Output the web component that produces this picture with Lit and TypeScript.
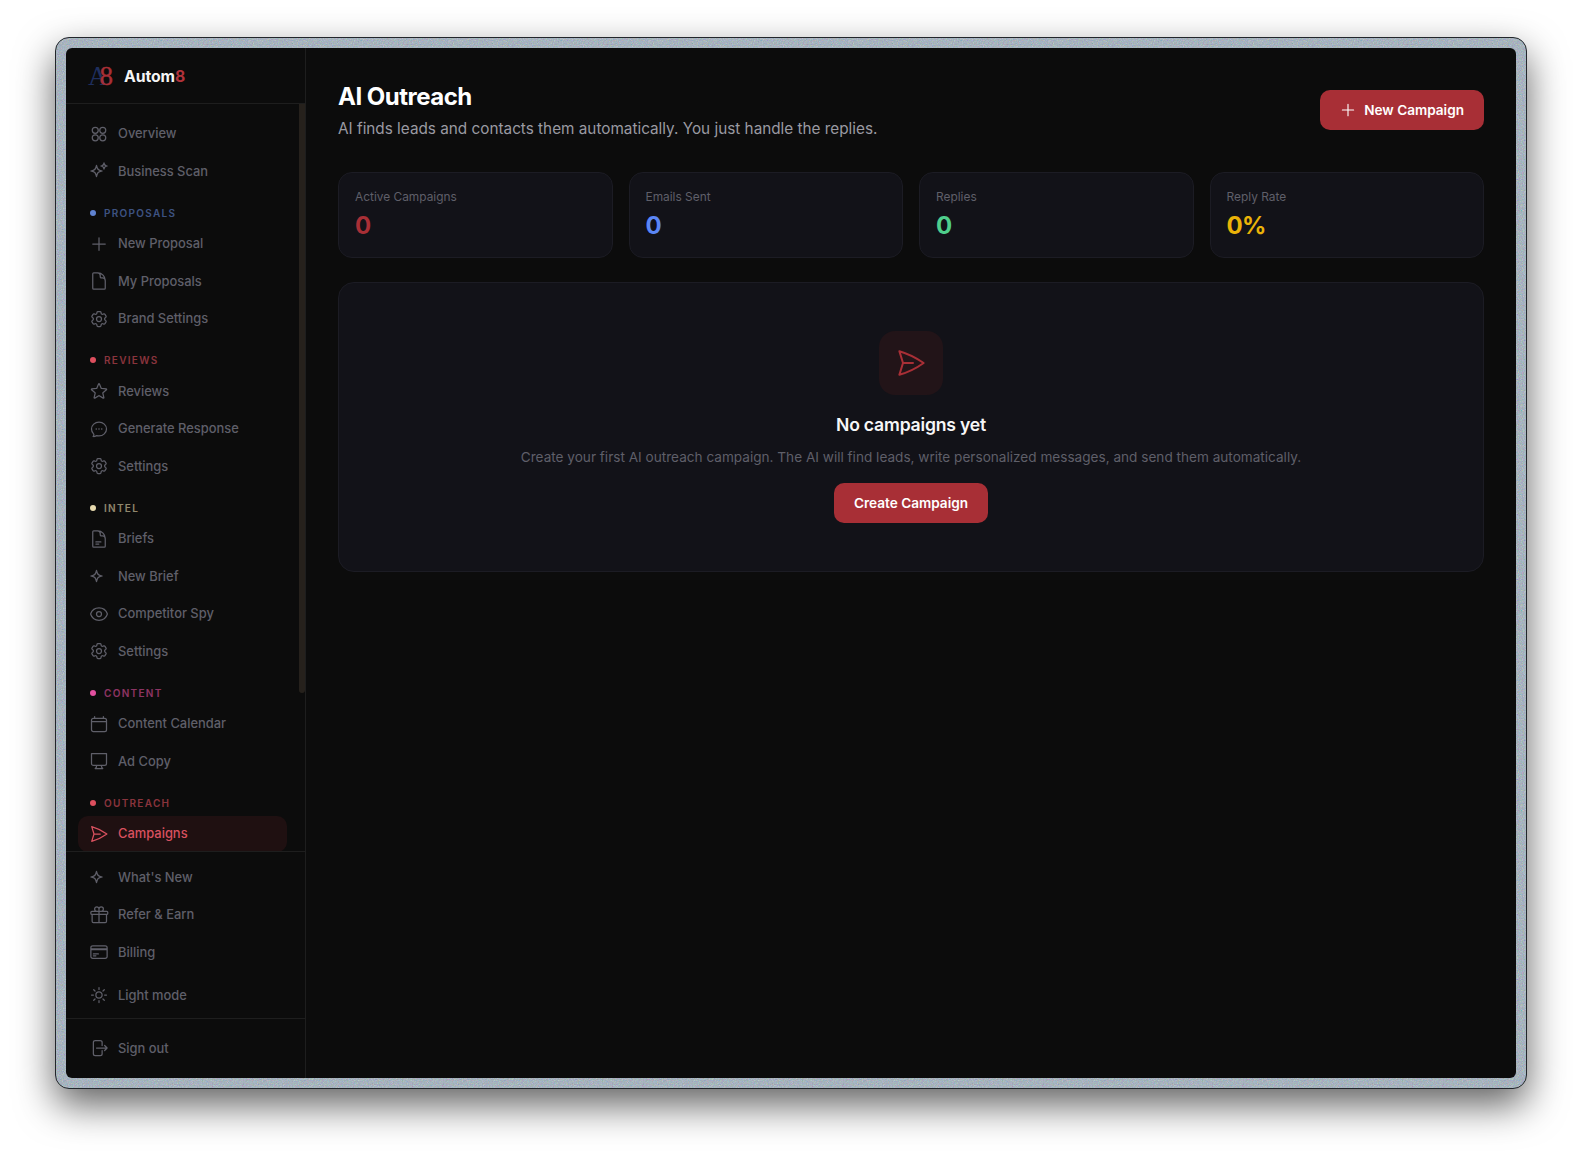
import { LitElement, html, css, svg } from "lit";
import { customElement } from "lit/decorators.js";

const doc = "M19.5 14.25v-2.625a3.375 3.375 0 0 0-3.375-3.375h-1.5A1.125 1.125 0 0 1 13.5 7.125v-1.5a3.375 3.375 0 0 0-3.375-3.375H8.25m2.25 0H5.625c-.621 0-1.125.504-1.125 1.125v17.25c0 .621.504 1.125 1.125 1.125h12.75c.621 0 1.125-.504 1.125-1.125V11.25a9 9 0 0 0-9-9Z";
const gear = "M9.594 3.94c.09-.542.56-.94 1.11-.94h2.593c.55 0 1.02.398 1.11.94l.213 1.281c.063.374.313.686.645.87.074.04.147.083.22.127.325.196.72.257 1.075.124l1.217-.456a1.125 1.125 0 0 1 1.37.49l1.296 2.247a1.125 1.125 0 0 1-.26 1.431l-1.003.827c-.293.241-.438.613-.43.992a7.723 7.723 0 0 1 0 .255c-.008.378.137.75.43.991l1.004.827c.424.35.534.955.26 1.43l-1.298 2.247a1.125 1.125 0 0 1-1.369.491l-1.217-.456c-.355-.133-.75-.072-1.076.124a6.47 6.47 0 0 1-.22.128c-.331.183-.581.495-.644.869l-.213 1.281c-.09.543-.56.94-1.11.94h-2.594c-.55 0-1.019-.398-1.11-.94l-.213-1.281c-.062-.374-.312-.686-.644-.87a6.52 6.52 0 0 1-.22-.127c-.325-.196-.72-.257-1.076-.124l-1.217.456a1.125 1.125 0 0 1-1.369-.49l-1.297-2.247a1.125 1.125 0 0 1 .26-1.431l1.004-.827c.292-.24.437-.613.43-.991a6.932 6.932 0 0 1 0-.255c.007-.38-.138-.751-.43-.992l-1.004-.827a1.125 1.125 0 0 1-.26-1.43l1.297-2.247a1.125 1.125 0 0 1 1.37-.491l1.216.456c.356.133.751.072 1.076-.124.072-.044.146-.086.22-.128.332-.183.582-.495.644-.869l.214-1.28Z M15 12a3 3 0 1 1-6 0 3 3 0 0 1 6 0Z";
const spark = "M9.813 15.904 9 18.75l-.813-2.846a4.5 4.5 0 0 0-3.09-3.09L2.25 12l2.846-.813a4.5 4.5 0 0 0 3.09-3.09L9 5.25l.813 2.846a4.5 4.5 0 0 0 3.09 3.09L15.75 12l-2.846.813a4.5 4.5 0 0 0-3.09 3.09Z";
const plane = "M6 12 3.269 3.125A59.769 59.769 0 0 1 21.485 12 59.768 59.768 0 0 1 3.27 20.875L5.999 12Zm0 0h7.5";
const plus = "M12 4.5v15m7.5-7.5h-15";

const icons: Record<string, any> = {
  grid: svg`<circle cx="7.5" cy="7.5" r="3.6"/><circle cx="16.5" cy="7.5" r="3.6"/><circle cx="7.5" cy="16.5" r="3.6"/><circle cx="16.5" cy="16.5" r="3.6"/>`,
  sparkles: svg`<path d="${spark}"/><path d="M18.259 8.715 18 9.75l-.259-1.035a3.375 3.375 0 0 0-2.455-2.456L14.25 6l1.036-.259a3.375 3.375 0 0 0 2.455-2.456L18 2.25l.259 1.035a3.375 3.375 0 0 0 2.456 2.456L21.75 6l-1.035.259a3.375 3.375 0 0 0-2.456 2.456Z"/>`,
  spark: svg`<path d="${spark}"/>`,
  plus: svg`<path d="${plus}"/>`,
  file: svg`<path d="${doc}"/>`,
  filetext: svg`<path d="${doc}"/><path d="M8.25 15.5h6M8.25 18h3.5"/>`,
  gear: svg`<path d="${gear}"/>`,
  star: svg`<path d="M11.48 3.499a.562.562 0 0 1 1.04 0l2.125 5.111a.563.563 0 0 0 .475.345l5.518.442c.499.04.701.663.321.988l-4.204 3.602a.563.563 0 0 0-.182.557l1.285 5.385a.562.562 0 0 1-.84.61l-4.725-2.885a.562.562 0 0 0-.586 0L6.982 20.54a.562.562 0 0 1-.84-.61l1.285-5.386a.562.562 0 0 0-.182-.557l-4.204-3.602a.562.562 0 0 1 .321-.988l5.518-.442a.563.563 0 0 0 .475-.345L11.48 3.5Z"/>`,
  chat: svg`<path d="M12 20.25c4.97 0 9-3.694 9-8.25s-4.03-8.25-9-8.25S3 7.444 3 12c0 2.104.859 4.023 2.273 5.48.432.447.74 1.04.586 1.641a4.483 4.483 0 0 1-.923 1.785A5.969 5.969 0 0 0 6 21c1.282 0 2.47-.402 3.445-1.087.81.22 1.668.337 2.555.337Z"/><path stroke-width="2" d="M8.7 12h.01M12 12h.01M15.3 12h.01"/>`,
  eye: svg`<path d="M2.036 12.322a1.012 1.012 0 0 1 0-.639C3.423 7.51 7.36 4.5 12 4.5c4.638 0 8.573 3.007 9.963 7.178.07.207.07.431 0 .639C20.577 16.49 16.64 19.5 12 19.5c-4.638 0-8.573-3.007-9.963-7.178Z"/><path d="M15 12a3 3 0 1 1-6 0 3 3 0 0 1 6 0Z"/>`,
  calendar: svg`<path d="M6.75 3v2.25M17.25 3v2.25M3 18.75V7.5a2.25 2.25 0 0 1 2.25-2.25h13.5A2.25 2.25 0 0 1 21 7.5v11.25A2.25 2.25 0 0 1 18.75 21H5.25A2.25 2.25 0 0 1 3 18.75ZM3 9h18"/>`,
  monitor: svg`<path d="M9 17.25v1.007a3 3 0 0 1-.879 2.122L7.5 21h9l-.621-.621A3 3 0 0 1 15 18.257V17.25M3 3h18v12a2.25 2.25 0 0 1-2.25 2.25H5.25A2.25 2.25 0 0 1 3 15V3Z"/>`,
  plane: svg`<path d="${plane}"/>`,
  gift: svg`<path d="M21 11.25v8.25a1.5 1.5 0 0 1-1.5 1.5H5.25a1.5 1.5 0 0 1-1.5-1.5v-8.25M12 4.875A2.625 2.625 0 1 0 9.375 7.5H12m0-2.625V7.5m0-2.625A2.625 2.625 0 1 1 14.625 7.5H12m0 0V21m-8.625-9.75h18c.621 0 1.125-.504 1.125-1.125v-1.5c0-.621-.504-1.125-1.125-1.125h-18c-.621 0-1.125.504-1.125 1.125v1.5c0 .621.504 1.125 1.125 1.125Z"/>`,
  card: svg`<path d="M2.25 8.25h19.5M2.25 9h19.5m-16.5 5.25h6m-6 2.25h3m-3.75 3h15a2.25 2.25 0 0 0 2.25-2.25V6.75A2.25 2.25 0 0 0 19.5 4.5h-15a2.25 2.25 0 0 0-2.25 2.25v10.5A2.25 2.25 0 0 0 4.5 19.5Z"/>`,
  sun: svg`<path d="M12 3v2.25m6.364.386-1.591 1.591M21 12h-2.25m-.386 6.364-1.591-1.591M12 18.75V21m-4.773-4.227-1.591 1.591M5.25 12H3m4.227-4.773L5.636 5.636M15.75 12a3.75 3.75 0 1 1-7.5 0 3.75 3.75 0 0 1 7.5 0Z"/>`,
  logout: svg`<path d="M15.75 9V5.25A2.25 2.25 0 0 0 13.5 3h-6a2.25 2.25 0 0 0-2.25 2.25v13.5A2.25 2.25 0 0 0 7.5 21h6a2.25 2.25 0 0 0 2.25-2.25V15m3 0 3-3m0 0-3-3m3 3H9"/>`,
};

const icon = (name: string, cls = "ico") => html`<svg class=${cls} viewBox="0 0 24 24" fill="none" stroke="currentColor" stroke-width="1.5" stroke-linecap="round" stroke-linejoin="round">${icons[name]}</svg>`;

type Item = [string, string];
const sections: { label?: string; cls?: string; items: Item[] }[] = [
  { items: [["grid", "Overview"], ["sparkles", "Business Scan"]] },
  { label: "Proposals", cls: "blue", items: [["plus", "New Proposal"], ["file", "My Proposals"], ["gear", "Brand Settings"]] },
  { label: "Reviews", cls: "red", items: [["star", "Reviews"], ["chat", "Generate Response"], ["gear", "Settings"]] },
  { label: "Intel", cls: "sand", items: [["filetext", "Briefs"], ["spark", "New Brief"], ["eye", "Competitor Spy"], ["gear", "Settings"]] },
  { label: "Content", cls: "pink", items: [["calendar", "Content Calendar"], ["monitor", "Ad Copy"]] },
  { label: "Outreach", cls: "red", items: [["plane", "Campaigns"]] },
];

const stats = [
  ["Active Campaigns", "0", "v-red"],
  ["Emails Sent", "0", "v-blue"],
  ["Replies", "0", "v-green"],
  ["Reply Rate", "0%", "v-yellow"],
];

@customElement("app-root")
export class AppRoot extends LitElement {
  static styles = css`
    :host {
      display: block;
      height: 1162px;
      background: #fff;
      padding: 37px 55px 0;
      box-sizing: border-box;
      font-family: Inter, "Liberation Sans", sans-serif;
      -webkit-font-smoothing: antialiased;
    }
    .frame {
      width: 1472px;
      height: 1052px;
      box-sizing: border-box;
      padding: 10px;
      border: 1px solid #22262b;
      border-radius: 14px;
      background-color: #9fadb8;
      background-image: url("data:image/svg+xml,%3Csvg xmlns='http://www.w3.org/2000/svg' width='200' height='200'%3E%3Cfilter id='n'%3E%3CfeTurbulence type='fractalNoise' baseFrequency='.8' numOctaves='3' stitchTiles='stitch'/%3E%3CfeColorMatrix values='1.2 0 0 0 -.1 0 1.2 0 0 -.05 0 0 1.3 0 -.03 0 0 0 .7 -.05'/%3E%3C/filter%3E%3Crect width='200' height='200' filter='url(%23n)'/%3E%3C/svg%3E");
      box-shadow: 0 16px 38px rgba(0, 0, 0, 0.62);
    }
    .app {
      display: flex;
      height: 1030px;
      border-radius: 6px;
      overflow: hidden;
      background: #0c0c0c;
    }
    .side {
      width: 240px;
      flex: none;
      box-sizing: border-box;
      border-right: 1px solid #1e1e1e;
      display: flex;
      flex-direction: column;
    }
    .brand {
      height: 56px;
      flex: none;
      box-sizing: border-box;
      border-bottom: 1px solid #1e1e1e;
      display: flex;
      align-items: center;
      padding: 1px 0 0 22px;
      gap: 12px;
    }
    .logo {
      font-family: "Liberation Serif", serif;
      font-size: 27px;
      line-height: 24px;
      width: 24px;
      white-space: nowrap;
      letter-spacing: -8px;
      color: #1f2f5e;
    }
    .logo b { font-weight: 400; color: #a82f36; -webkit-text-stroke: 0.4px #a82f36; }
    .name { font-size: 15.8px; font-weight: 700; color: #f4f4f4; letter-spacing: -0.1px; }
    .name span { color: #b0323a; }
    .nav {
      flex: 1;
      min-height: 0;
      overflow: hidden;
      position: relative;
      padding: 12px 18px 0 12px;
    }
    .thumb {
      position: absolute;
      top: 0;
      right: 0;
      width: 6px;
      height: 589px;
      border-radius: 0 0 3px 3px;
      background: #26211c;
    }
    .group { display: flex; flex-direction: column; gap: 2px; }
    .label {
      display: flex;
      align-items: center;
      gap: 8px;
      height: 14px;
      margin: 16.5px 0 6.5px 12px;
      font-size: 10px;
      font-weight: 600;
      letter-spacing: 1.3px;
      text-transform: uppercase;
    }
    .dot { width: 6px; height: 6px; border-radius: 50%; background: currentColor; flex: none; }
    .label span:last-child { opacity: 0.6; }
    .blue { color: #5f82d0; }
    .red { color: #dd4f5e; }
    .sand { color: #e6d9ae; }
    .pink { color: #e2509f; }
    .item {
      display: flex;
      align-items: center;
      gap: 9px;
      height: 35.5px;
      padding-left: 11px;
      border-radius: 10px;
      font-size: 12.9px;
      font-weight: 500;
      color: #5f5f69;
      white-space: nowrap;
    }
    .item.on { background: #1f1011; color: #d9515f; }
    .ico { width: 20px; height: 20px; flex: none; }
    .foot {
      flex: none;
      border-top: 1px solid #1e1e1e;
      padding: 8px 12px 4.5px;
      display: flex;
      flex-direction: column;
      gap: 2px;
    }
    .foot .sp { margin-top: 5.5px; }
    .out {
      flex: none;
      border-top: 1px solid #1e1e1e;
      padding: 12px 12px 12px;
    }
    .main {
      flex: 1;
      min-width: 0;
      padding: 32px;
      display: flex;
      flex-direction: column;
    }
    .head {
      display: flex;
      justify-content: space-between;
      align-items: flex-start;
      height: 60px;
      margin-bottom: 32px;
    }
    h1 { margin: 0 0 3px; font-size: 24px; line-height: 34px; font-weight: 700; color: #fff; letter-spacing: -0.5px; }
    .sub { margin: 0; font-size: 15.3px; line-height: 24px; color: #9a9aa2; }
    .btn {
      display: inline-flex;
      align-items: center;
      justify-content: center;
      height: 40px;
      border: 0;
      border-radius: 10px;
      background: #a82f36;
      color: #fff;
      font: 600 13.6px/20px Inter, "Liberation Sans", sans-serif;
      padding: 0 20px;
      gap: 8px;
    }
    .new { align-self: center; padding-left: 19px; gap: 7px; }
    .btn .pl { width: 18px; height: 18px; }
    .stats { display: grid; grid-template-columns: repeat(4, 1fr); gap: 16px; margin-bottom: 24px; }
    .stat {
      box-sizing: border-box;
      height: 86px;
      padding: 16px;
      background: #121218;
      border: 1px solid #1c1c24;
      border-radius: 14px;
    }
    .stat-l { font-size: 11.9px; line-height: 16px; color: #5f5f69; margin-bottom: 5px; }
    .stat-v { font-size: 24px; line-height: 32px; font-weight: 700; letter-spacing: -0.8px; }
    .v-red { color: #a82f36; }
    .v-blue { color: #5b86f5; }
    .v-green { color: #4fce8c; }
    .v-yellow { color: #eab308; }
    .empty {
      background: #121218;
      border: 1px solid #1c1c24;
      border-radius: 16px;
      padding: 48px;
      display: flex;
      flex-direction: column;
      align-items: center;
    }
    .badge {
      width: 64px;
      height: 64px;
      border-radius: 16px;
      background: #221418;
      color: #a82f36;
      display: flex;
      align-items: center;
      justify-content: center;
      margin-bottom: 16px;
    }
    .badge svg { width: 32px; height: 32px; }
    h2 { margin: 0 0 8px; font-size: 17.6px; line-height: 28px; font-weight: 600; color: #f7f7f7; letter-spacing: -0.2px; }
    .empty p { margin: 0 0 16px; font-size: 13.6px; line-height: 20px; color: #5f5f69; }
  `;

  private row(it: Item, on = false) {
    return html`<div class="item ${on ? "on" : ""}">${icon(it[0])}<span>${it[1]}</span></div>`;
  }

  render() {
    return html`
      <div class="frame">
        <div class="app">
          <aside class="side">
            <div class="brand">
              <div class="logo">A<b>8</b></div>
              <div class="name">Autom<span>8</span></div>
            </div>
            <nav class="nav">
              <div class="thumb"></div>
              ${sections.map(
                (s) => html`
                  ${s.label ? html`<div class="label ${s.cls}"><span class="dot"></span><span>${s.label}</span></div>` : ""}
                  <div class="group">${s.items.map((it) => this.row(it, it[1] === "Campaigns"))}</div>
                `
              )}
            </nav>
            <div class="foot">
              ${this.row(["spark", "What's New"])}
              ${this.row(["gift", "Refer & Earn"])}
              ${this.row(["card", "Billing"])}
              <div class="sp">${this.row(["sun", "Light mode"])}</div>
            </div>
            <div class="out">${this.row(["logout", "Sign out"])}</div>
          </aside>
          <main class="main">
            <header class="head">
              <div>
                <h1>AI Outreach</h1>
                <p class="sub">AI finds leads and contacts them automatically. You just handle the replies.</p>
              </div>
              <button class="btn new">${icon("plus", "pl")}New Campaign</button>
            </header>
            <section class="stats">
              ${stats.map(
                ([l, v, c]) => html`<div class="stat"><div class="stat-l">${l}</div><div class="stat-v ${c}">${v}</div></div>`
              )}
            </section>
            <section class="empty">
              <div class="badge">${icon("plane", "")}</div>
              <h2>No campaigns yet</h2>
              <p>Create your first AI outreach campaign. The AI will find leads, write personalized messages, and send them automatically.</p>
              <button class="btn">Create Campaign</button>
            </section>
          </main>
        </div>
      </div>
    `;
  }
}
